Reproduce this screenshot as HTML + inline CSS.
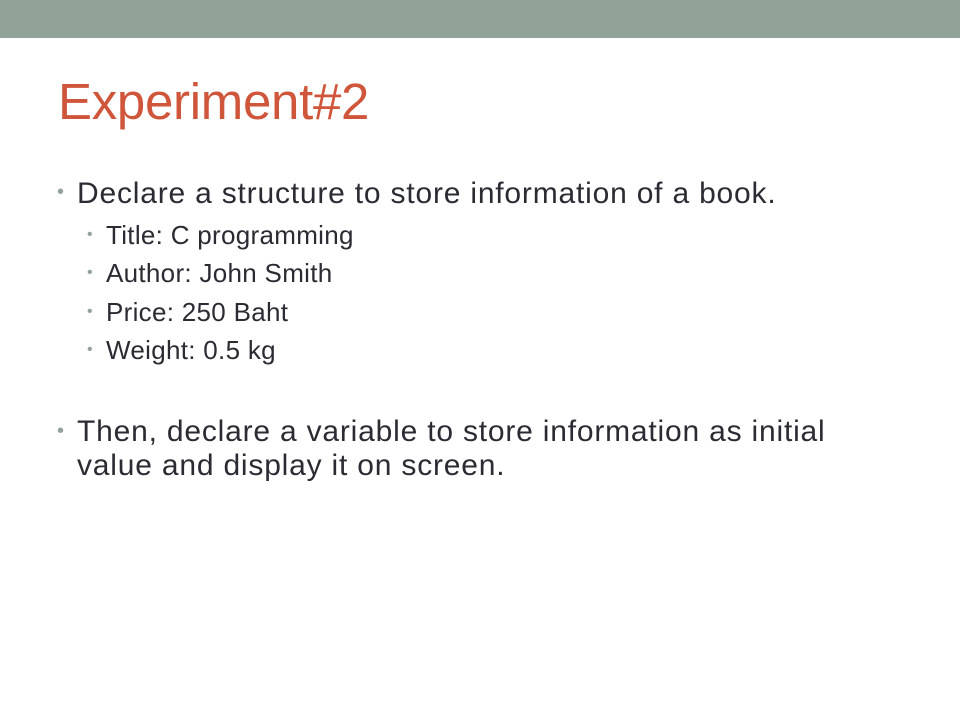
<!DOCTYPE html>
<html><head><style>
body{margin:0;width:960px;height:720px;background:#fff;position:relative;overflow:hidden;font-family:"Liberation Sans",sans-serif;}
.bar{position:absolute;left:0;top:0;width:960px;height:38px;background:#93a299;}
.t{position:absolute;left:58px;top:72px;font-size:51px;color:#d0563b;letter-spacing:-0.3px;}
.l{position:absolute;color:#2b2b33;white-space:nowrap;}
.b1{font-size:30px;left:77px;letter-spacing:0.8px;}
.b2{font-size:26px;left:106px;letter-spacing:0.3px;}
.d{position:absolute;color:#93a299;}
</style></head><body>
<div class="bar"></div>
<div class="t">Experiment#2</div>
<div class="d" style="left:57px;top:181px;font-size:20px">•</div>
<div class="l b1" style="top:177px">Declare a structure to store information of a book.</div>
<div class="d" style="left:87px;top:226px;font-size:16px">•</div>
<div class="l b2" style="top:220px">Title: C programming</div>
<div class="d" style="left:87px;top:264px;font-size:16px">•</div>
<div class="l b2" style="top:258px">Author: John Smith</div>
<div class="d" style="left:87px;top:303px;font-size:16px">•</div>
<div class="l b2" style="top:297px">Price: 250 Baht</div>
<div class="d" style="left:87px;top:341px;font-size:16px">•</div>
<div class="l b2" style="top:335px">Weight: 0.5 kg</div>
<div class="d" style="left:57px;top:420px;font-size:20px">•</div>
<div class="l b1" style="top:415px;line-height:34px">Then, declare a variable to store information as initial<br>value and display it on screen.</div>
</body></html>
